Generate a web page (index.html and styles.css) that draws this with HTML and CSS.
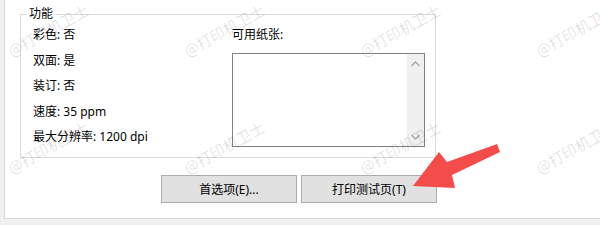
FILE: index.html
```html
<!DOCTYPE html>
<html lang="zh-CN">
<head>
<meta charset="utf-8">
<link rel="stylesheet" href="styles.css">
</head>
<body>
<div class="panel">
  <fieldset class="group">
    <legend class="legend">功能</legend>
    <div class="cols">
      <div class="left">
        <div class="row">彩色: 否</div>
        <div class="row">双面: 是</div>
        <div class="row">装订: 否</div>
        <div class="row">速度: 35 ppm</div>
        <div class="row">最大分辨率: 1200 dpi</div>
      </div>
      <div class="right">
        <div class="row">可用纸张:</div>
        <div class="listbox">
          <div class="list-body"></div>
          <div class="scrollbar">
            <svg class="chev" width="17" height="12" viewBox="0 0 17 12"><polyline points="4.5,8 8.5,4 12.5,8" fill="none" stroke="#a6a6a6" stroke-width="1.3"/></svg>
            <svg class="chev" width="17" height="12" viewBox="0 0 17 12"><polyline points="4.5,4 8.5,8 12.5,4" fill="none" stroke="#a6a6a6" stroke-width="1.3"/></svg>
          </div>
        </div>
      </div>
    </div>
  </fieldset>
  <div class="buttons">
    <button class="btn">首选项(E)...</button>
    <button class="btn">打印测试页(T)</button>
  </div>
</div>

<div class="wm" style="left:13px;top:43px">@打印机卫士</div>
<div class="wm" style="left:189px;top:43px">@打印机卫士</div>
<div class="wm" style="left:365px;top:43px">@打印机卫士</div>
<div class="wm" style="left:541px;top:43px">@打印机卫士</div>
<div class="wm" style="left:13px;top:160px">@打印机卫士</div>
<div class="wm" style="left:189px;top:160px">@打印机卫士</div>
<div class="wm" style="left:365px;top:160px">@打印机卫士</div>
<div class="wm" style="left:541px;top:160px">@打印机卫士</div>

<svg class="arrow" width="600" height="225" viewBox="0 0 600 225">
  <polygon points="413,186 439,152 447,162 497,144 500,152 452,175 455,188" fill="#f44b4b"/>
</svg>
</body>
</html>
```

FILE: styles.css
```css
html, body {
  margin: 0;
  padding: 0;
}
body {
  width: 600px;
  height: 225px;
  background: #f0f0f0;
  overflow: hidden;
  position: relative;
  font-family: "Noto Sans", "Noto Sans CJK SC", sans-serif;
  font-size: 12px;
  color: #000;
}
.panel {
  margin-left: 4px;
  height: 219px;
  box-sizing: border-box;
  background: #fff;
  border-left: 1px solid #d9d9d9;
  border-bottom: 1px solid #d9d9d9;
  padding-top: 7px;
}
.group {
  margin: 0 0 0 15px;
  padding: 0 0 0 6px;
  width: 416px;
  box-sizing: border-box;
  border: 1px solid #dcdcdc;
  min-inline-size: 0;
}
.legend {
  padding: 0 2px;
  line-height: 14px;
  height: 14px;
}
.cols {
  display: flex;
  height: 136px;
  padding-left: 6px;
  padding-top: 1px;
  box-sizing: border-box;
}
.left {
  width: 199px;
}
.right {
  width: 193px;
}
.row {
  line-height: 25.5px;
  height: 25.5px;
  white-space: nowrap;
}
.listbox {
  margin-top: 5px;
  width: 193px;
  height: 94px;
  box-sizing: border-box;
  border: 1px solid #828282;
  display: flex;
  background: #fff;
}
.list-body {
  flex: 1;
}
.scrollbar {
  width: 17px;
  background: #f0f0f0;
  display: flex;
  flex-direction: column;
  justify-content: space-between;
  padding: 4px 0 3px;
}
.chev {
  display: block;
}
.buttons {
  display: flex;
  gap: 4px;
  margin-top: 17px;
  padding-left: 156px;
}
.btn {
  width: 136px;
  height: 28px;
  box-sizing: border-box;
  background: #e1e1e1;
  border: 1px solid #adadad;
  border-radius: 0;
  font-family: "Noto Sans", "Noto Sans CJK SC", sans-serif;
  font-size: 12px;
  color: #000;
  padding: 0;
  margin: 0;
}
.wm {
  position: absolute;
  font-family: "Noto Sans CJK SC", sans-serif;
  font-size: 15px;
  line-height: 16px;
  color: rgba(0, 0, 0, 0.13);
  white-space: nowrap;
  transform-origin: 0 100%;
  transform: rotate(-29deg);
  pointer-events: none;
}
.arrow {
  position: absolute;
  left: 0;
  top: 0;
}
```
